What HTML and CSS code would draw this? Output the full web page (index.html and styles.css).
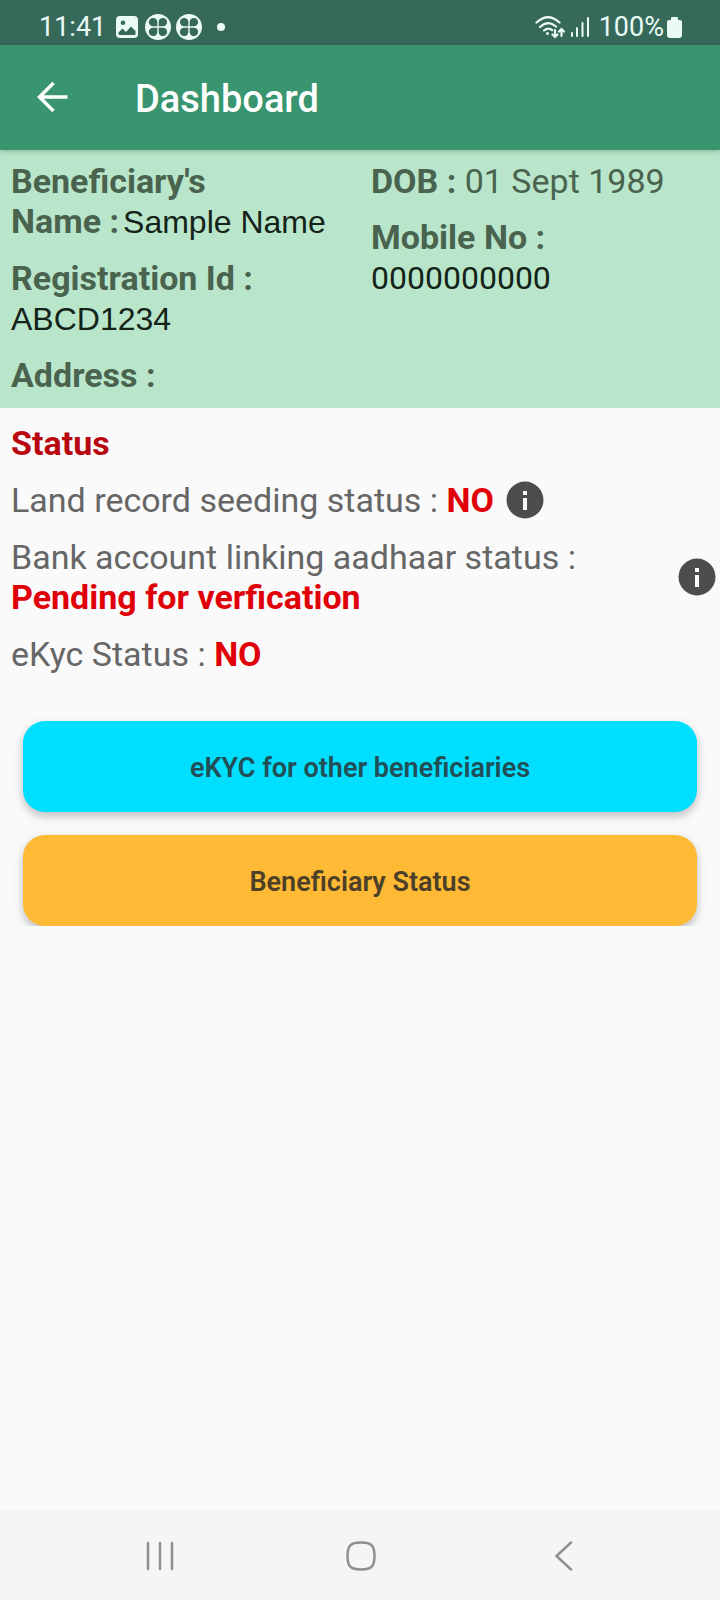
FILE: index.html
```html
<!DOCTYPE html>
<html lang="en">
<head>
<meta charset="utf-8">
<meta name="viewport" content="width=device-width, initial-scale=1">
<title>Dashboard</title>
<link rel="stylesheet" href="styles.css">
</head>
<body>
<div class="screen">
  <div class="status-bar">
    <div class="status-group">
      <span class="clock">11:41</span>
      <svg class="icon-photo" width="22" height="22" viewBox="0 0 22 22"><path fill="#eafaf4" fill-rule="evenodd" d="M4 0h14a4 4 0 0 1 4 4v14a4 4 0 0 1-4 4H4a4 4 0 0 1-4-4V4a4 4 0 0 1 4-4zM2.500 16.500V18q0 1 1 1h15q1 0 1-1v-3l-4.500-4.500-5 5.500-3.500-3.500zM7 4.500a2.300 2.300 0 1 0 .01 0z"/></svg>
      <svg class="icon-clover" width="26" height="26" viewBox="0 0 26 26"><circle cx="13" cy="13" r="13" fill="#eafaf4"/><g fill="#37695a"><path d="M12.300 12.300H8.300a4.200 4.200 0 1 1 4-4.200z"/><path d="M13.700 12.300h4a4.200 4.200 0 1 0-4-4.200z"/><path d="M12.300 13.700h-4a4.200 4.200 0 1 0 4 4.200z"/><path d="M13.700 13.700h4a4.200 4.200 0 1 1-4 4.200z"/></g></svg>
      <svg class="icon-clover" width="26" height="26" viewBox="0 0 26 26"><circle cx="13" cy="13" r="13" fill="#eafaf4"/><g fill="#37695a"><path d="M12.300 12.300H8.300a4.200 4.200 0 1 1 4-4.200z"/><path d="M13.700 12.300h4a4.200 4.200 0 1 0-4-4.200z"/><path d="M12.300 13.700h-4a4.200 4.200 0 1 0 4 4.200z"/><path d="M13.700 13.700h4a4.200 4.200 0 1 1-4 4.200z"/></g></svg>
      <span class="dot"></span>
    </div>
    <div class="status-group">
      <svg width="30" height="24" viewBox="0 0 30 24" fill="none" stroke="#eafaf4" stroke-width="2.200" stroke-linecap="round"><path d="M1.500 7.500Q13 -3 24.500 7.500M5 12q8-7.500 16-.5M9 15.500q4-3.500 8-.5"/><circle cx="12.500" cy="18.500" r="1.500" fill="#eafaf4" stroke="none"/><path d="M20 15v7M17.500 19.500 20 22l2.500-2.500M26.500 21v-7M24 16.500l2.500-2.500 2.500 2.500"/></svg>
      <svg class="icon-signal" width="18" height="20" viewBox="0 0 18 20" stroke="#eafaf4" stroke-width="2" stroke-linecap="round"><path d="M1 16v3M6 11v8M11.500 6v13M17 1v18"/></svg>
      <span class="battery-text">100%</span>
      <svg class="icon-battery" width="15" height="21" viewBox="0 0 15 21"><path fill="#eafaf4" d="M5 0h5a1 1 0 0 1 1 1v2h2a2 2 0 0 1 2 2v13a3 3 0 0 1-3 3H3a3 3 0 0 1-3-3V5a2 2 0 0 1 2-2h2V1a1 1 0 0 1 1-1z"/></svg>
    </div>
  </div>

  <header class="app-bar">
    <button class="back" aria-label="Back">
      <svg width="32" height="32" viewBox="0 0 32 32" fill="none" stroke="#fff" stroke-width="3.500"><path d="M30.500 16H3M16.500 2 2.500 16l14 14"/></svg>
    </button>
    <h1 class="title">Dashboard</h1>
  </header>

  <main class="content">
    <section class="profile">
      <div class="column">
        <div class="field"><b>Beneficiary's<br>Name :</b><span class="value name">Sample Name</span></div>
        <div class="field"><b>Registration Id :</b><br><span class="value">ABCD1234</span></div>
        <div class="field"><b>Address :</b></div>
      </div>
      <div class="column">
        <div class="field"><b>DOB :</b> 01 Sept 1989</div>
        <div class="field"><b>Mobile No :</b><br><span class="number">0000000000</span></div>
      </div>
    </section>

    <section class="status">
      <h2 class="status-title">Status</h2>
      <div class="status-row">
        <p class="status-text">Land record seeding status : <b>NO</b></p>
        <button class="info" aria-label="Land record seeding information">
          <svg width="38" height="38" viewBox="0 0 38 38"><circle cx="19" cy="19" r="18.500" fill="#4d4d4d"/><path fill="#fafafa" d="M17 10h4v4h-4zM17 17h4v12h-4z"/></svg>
        </button>
      </div>
      <div class="status-row spread">
        <p class="status-text">Bank account linking aadhaar status : <b class="state">Pending for verfication</b></p>
        <button class="info" aria-label="Bank account linking information">
          <svg width="38" height="38" viewBox="0 0 38 38"><circle cx="19" cy="19" r="18.500" fill="#4d4d4d"/><path fill="#fafafa" d="M17 10h4v4h-4zM17 17h4v12h-4z"/></svg>
        </button>
      </div>
      <div class="status-row">
        <p class="status-text">eKyc Status : <b>NO</b></p>
      </div>
    </section>

    <div class="actions">
      <button class="action ekyc">eKYC for other beneficiaries</button>
      <button class="action beneficiary">Beneficiary Status</button>
    </div>
  </main>

  <nav class="nav-bar">
    <button class="nav-button" aria-label="Recent apps"><svg width="30" height="30" viewBox="0 0 30 30" fill="none" stroke="#8f8f8f" stroke-width="2.500" stroke-linecap="round"><path d="M3 2v26M15 2v26M27 2v26"/></svg></button>
    <button class="nav-button" aria-label="Home"><svg width="30" height="30" viewBox="0 0 30 30" fill="none" stroke="#8f8f8f" stroke-width="2.500"><path d="M15 1.500c10.500 0 13.500 3 13.500 13.500S25.500 28.500 15 28.500 1.500 25.500 1.500 15 4.500 1.500 15 1.500z"/></svg></button>
    <button class="nav-button" aria-label="Back"><svg width="30" height="30" viewBox="0 0 30 30" fill="none" stroke="#8f8f8f" stroke-width="2.500" stroke-linecap="round"><path d="M24 1.500 9.500 15 24 28.500"/></svg></button>
  </nav>
</div>
</body>
</html>
```

FILE: styles.css
```css
* { box-sizing: border-box; }
body {
  margin: 0;
  font-family: Roboto, "Liberation Sans", sans-serif;
  background: #fafafa;
}
button {
  border: 0;
  padding: 0;
  background: none;
  font-family: inherit;
  cursor: pointer;
}
svg { display: block; }
.screen {
  min-height: 100vh;
  display: flex;
  flex-direction: column;
}
.status-bar {
  display: flex;
  justify-content: space-between;
  padding: 9px 38px 0 39px;
  height: 45px;
  background: #37695a;
  color: #eafaf4;
  font-size: 27px;
  line-height: 36px;
}
.status-group {
  display: flex;
  align-items: center;
  height: 36px;
}
.icon-photo { margin: 0 7px 0 10px; }
.icon-clover { margin-right: 5px; }
.dot {
  width: 8px;
  height: 8px;
  margin-left: 10px;
  border-radius: 50%;
  background: #eafaf4;
}
.icon-signal { margin: 0 10px 0 6px; }
.icon-battery { margin-left: 3px; }
.app-bar {
  position: relative;
  display: flex;
  align-items: center;
  height: 105px;
  padding: 0 37px 1px;
  gap: 66px;
  background: #38956f;
  box-shadow: 0 1px 5px rgba(0, 60, 30, 0.3);
}
.title {
  margin: 0;
  padding-top: 4px;
  color: #fff;
  font-size: 38px;
  font-weight: 500;
  line-height: 48px;
}
.content { flex: 1; }
.profile {
  display: grid;
  grid-template-columns: 1fr 1fr;
  padding: 11px 0 13px;
  background: #b9e6ca;
  color: #49634f;
  font-size: 34px;
  line-height: 40px;
}
.column {
  display: flex;
  flex-direction: column;
  gap: 16px;
  padding-left: 11px;
}
.value {
  color: #142318;
  font-family: "Liberation Sans", Arial, sans-serif;
  font-size: 32px;
}
.name { margin-left: 4px; }
.number {
  color: #142318;
  font-size: 32px;
}
.status {
  display: flex;
  flex-direction: column;
  gap: 17px;
  padding: 15px 4px 0 11px;
  color: #666;
  font-size: 34px;
  line-height: 40px;
}
.status-title {
  margin: 0;
  color: #b90710;
  font-size: 34px;
  line-height: 40px;
}
.status-row {
  display: flex;
  align-items: center;
  gap: 12px;
}
.spread { justify-content: space-between; }
.status-text { margin: 0; }
.status-text b { color: #e00008; }
.status-text .state { display: block; }
.info {
  height: 38px;
  flex: none;
}
.actions {
  display: grid;
  gap: 23px;
  margin-top: 25px;
  padding: 22px 23px 0;
  overflow: hidden;
}
.action {
  height: 91px;
  padding-top: 2px;
  border-radius: 22px;
  box-shadow: 0 4px 10px rgba(0, 0, 0, 0.25);
  font-size: 27px;
  font-weight: 600;
}
.ekyc {
  background: #00dfff;
  color: #224e56;
}
.beneficiary {
  background: #ffba35;
  color: #4c4028;
}
.nav-bar {
  display: flex;
  justify-content: space-around;
  align-items: center;
  height: 90px;
  padding: 2px 58px 0 60px;
  background: #f5f5f5;
}
.nav-button {
  padding: 10px;
}
```
